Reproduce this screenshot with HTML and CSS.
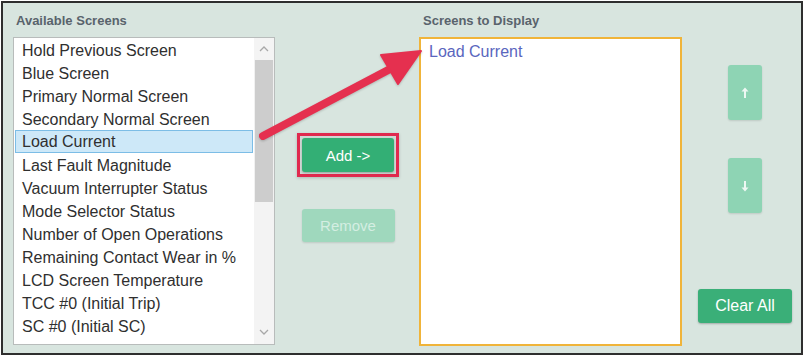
FILE: index.html
```html
<!DOCTYPE html>
<html>
<head>
<meta charset="utf-8">
<link rel="stylesheet" href="styles.css">
</head>
<body>
<div class="frame">
  <div class="col col-left">
    <div class="heading heading-left">Available Screens</div>
    <div class="listbox">
      <ul class="items">
        <li>Hold Previous Screen</li>
        <li>Blue Screen</li>
        <li>Primary Normal Screen</li>
        <li>Secondary Normal Screen</li>
        <li class="selected">Load Current</li>
        <li>Last Fault Magnitude</li>
        <li>Vacuum Interrupter Status</li>
        <li>Mode Selector Status</li>
        <li>Number of Open Operations</li>
        <li>Remaining Contact Wear in %</li>
        <li>LCD Screen Temperature</li>
        <li>TCC #0 (Initial Trip)</li>
        <li>SC #0 (Initial SC)</li>
      </ul>
      <div class="scrollbar">
        <div class="sb-arrow sb-up"><svg width="10" height="6" viewBox="0 0 10 6"><path d="M1 5 L5 1 L9 5" fill="none" stroke="#a8a8a8" stroke-width="1.3"/></svg></div>
        <div class="sb-thumb"></div>
        <div class="sb-track"></div>
        <div class="sb-arrow sb-down"><svg width="10" height="6" viewBox="0 0 10 6"><path d="M1 1 L5 5 L9 1" fill="none" stroke="#a8a8a8" stroke-width="1.3"/></svg></div>
      </div>
    </div>
  </div>
  <div class="col col-mid">
    <div class="highlight">
      <button class="btn btn-green btn-add">Add -&gt;</button>
    </div>
    <button class="btn btn-light btn-remove">Remove</button>
  </div>
  <div class="col col-right">
    <div class="heading heading-right">Screens to Display</div>
    <div class="display-box">
      <div class="display-item">Load Current</div>
    </div>
  </div>
  <div class="col col-btns">
    <button class="btn btn-light btn-move btn-up"><svg width="8" height="12" viewBox="0 0 8 12"><path d="M4 11 V3" stroke="#eef8f3" stroke-width="2"/><path d="M0.5 4.5 L4 0.5 L7.5 4.5 Z" fill="#eef8f3"/></svg></button>
    <button class="btn btn-light btn-move btn-down"><svg width="8" height="12" viewBox="0 0 8 12"><path d="M4 1 V9" stroke="#eef8f3" stroke-width="2"/><path d="M0.5 7.5 L4 11.5 L7.5 7.5 Z" fill="#eef8f3"/></svg></button>
    <div class="spacer"></div>
    <button class="btn btn-green btn-clear">Clear All</button>
  </div>
  <svg class="annot-arrow" width="807" height="358" viewBox="0 0 807 358">
    <line x1="263" y1="136" x2="392" y2="68" stroke="#e5304f" stroke-width="8" stroke-linecap="round"/>
    <polygon points="421,51 381,55 398,84" fill="#e5304f" stroke="#e5304f" stroke-width="2" stroke-linejoin="round"/>
  </svg>
</div>
</body>
</html>
```

FILE: styles.css
```css
* { box-sizing: border-box; }
html, body {
  margin: 0;
  padding: 0;
  background: #ffffff;
}
body {
  font-family: "Liberation Sans", Arial, sans-serif;
  width: 807px;
  height: 358px;
  overflow: hidden;
}
.frame {
  position: relative;
  margin: 1px 0 0 1px;
  width: 802px;
  height: 354px;
  border: 2px solid #2e2e2e;
  background: #d8e5df;
  display: flex;
  padding: 0 0 0 10px;
}
.col {
  display: flex;
  flex-direction: column;
}
.heading {
  height: 34px;
  padding-top: 10px;
  font-size: 13px;
  line-height: 15px;
  font-weight: bold;
  color: #59636c;
}
.heading-left { padding-left: 3px; }
.heading-right { padding-left: 4px; }

.col-left { width: 262px; }
.listbox {
  height: 308px;
  border: 1px solid #b8bcbb;
  background: #ffffff;
  display: flex;
}
.items {
  list-style: none;
  margin: 0;
  padding: 1px 0 0 0;
  flex: 1;
}
.items li {
  height: 23px;
  line-height: 23px;
  font-size: 16px;
  color: #2f2f2f;
  padding-left: 7px;
  margin: 0 1px;
  white-space: nowrap;
}
.items li.selected {
  background: #cde8f8;
  border: 1px solid #7cbde6;
  line-height: 21px;
  padding-left: 6px;
  margin-top: -1px;
  margin-bottom: 1px;
}
.scrollbar {
  width: 20px;
  display: flex;
  flex-direction: column;
  background: #f1f1f1;
}
.sb-arrow {
  height: 22px;
  display: flex;
  align-items: center;
  justify-content: center;
  background: #f4f4f4;
}
.sb-thumb {
  height: 142px;
  background: #cdcdcd;
  margin: 0 1px;
}
.sb-track { flex: 1; background: #f3f3f3; }
.sb-down { height: 24px; }

.col-mid {
  width: 144px;
  align-items: center;
  padding-top: 130px;
  padding-left: 2px;
}
.highlight {
  border: 3px solid #e0294e;
  padding: 2px;
  background: #cfd9d5;
  box-shadow: 0 1px 3px rgba(0,0,0,0.2);
}
.btn {
  font-family: "Liberation Sans", Arial, sans-serif;
  border: none;
  border-radius: 3px;
  padding: 0;
  cursor: pointer;
  display: flex;
  align-items: center;
  justify-content: center;
}
.btn-green {
  background: #33af75;
  color: #ffffff;
  box-shadow: 0 1px 2px rgba(0,0,0,0.25);
}
.btn-light {
  background: #9fd8bd;
  color: #d4eee2;
  box-shadow: 0 1px 2px rgba(0,0,0,0.12);
}
.btn-add {
  width: 92px;
  height: 34px;
  font-size: 15px;
}
.btn-remove {
  margin-top: 32px;
  width: 93px;
  height: 33px;
  font-size: 15px;
}

.col-right { width: 263px; }
.display-box {
  height: 309px;
  border: 2px solid #f0b43a;
  background: #ffffff;
  padding: 4px 0 0 8px;
}
.display-item {
  font-size: 16px;
  line-height: 18px;
  color: #5a66be;
}

.col-btns {
  width: 110px;
  align-items: flex-start;
  padding-top: 62px;
  padding-bottom: 30px;
}
.btn-move {
  width: 34px;
  height: 55px;
  margin-left: 46px;
  background: #8ed4b4;
}
.btn-down { margin-top: 38px; }
.spacer { flex: 1; }
.btn-clear {
  width: 94px;
  height: 34px;
  margin-left: 16px;
  font-size: 16px;
  background: #3aaf78;
}
.annot-arrow {
  position: absolute;
  left: -3px;
  top: -3px;
  pointer-events: none;
  filter: drop-shadow(0 1px 1px rgba(0,0,0,0.2));
}
```
